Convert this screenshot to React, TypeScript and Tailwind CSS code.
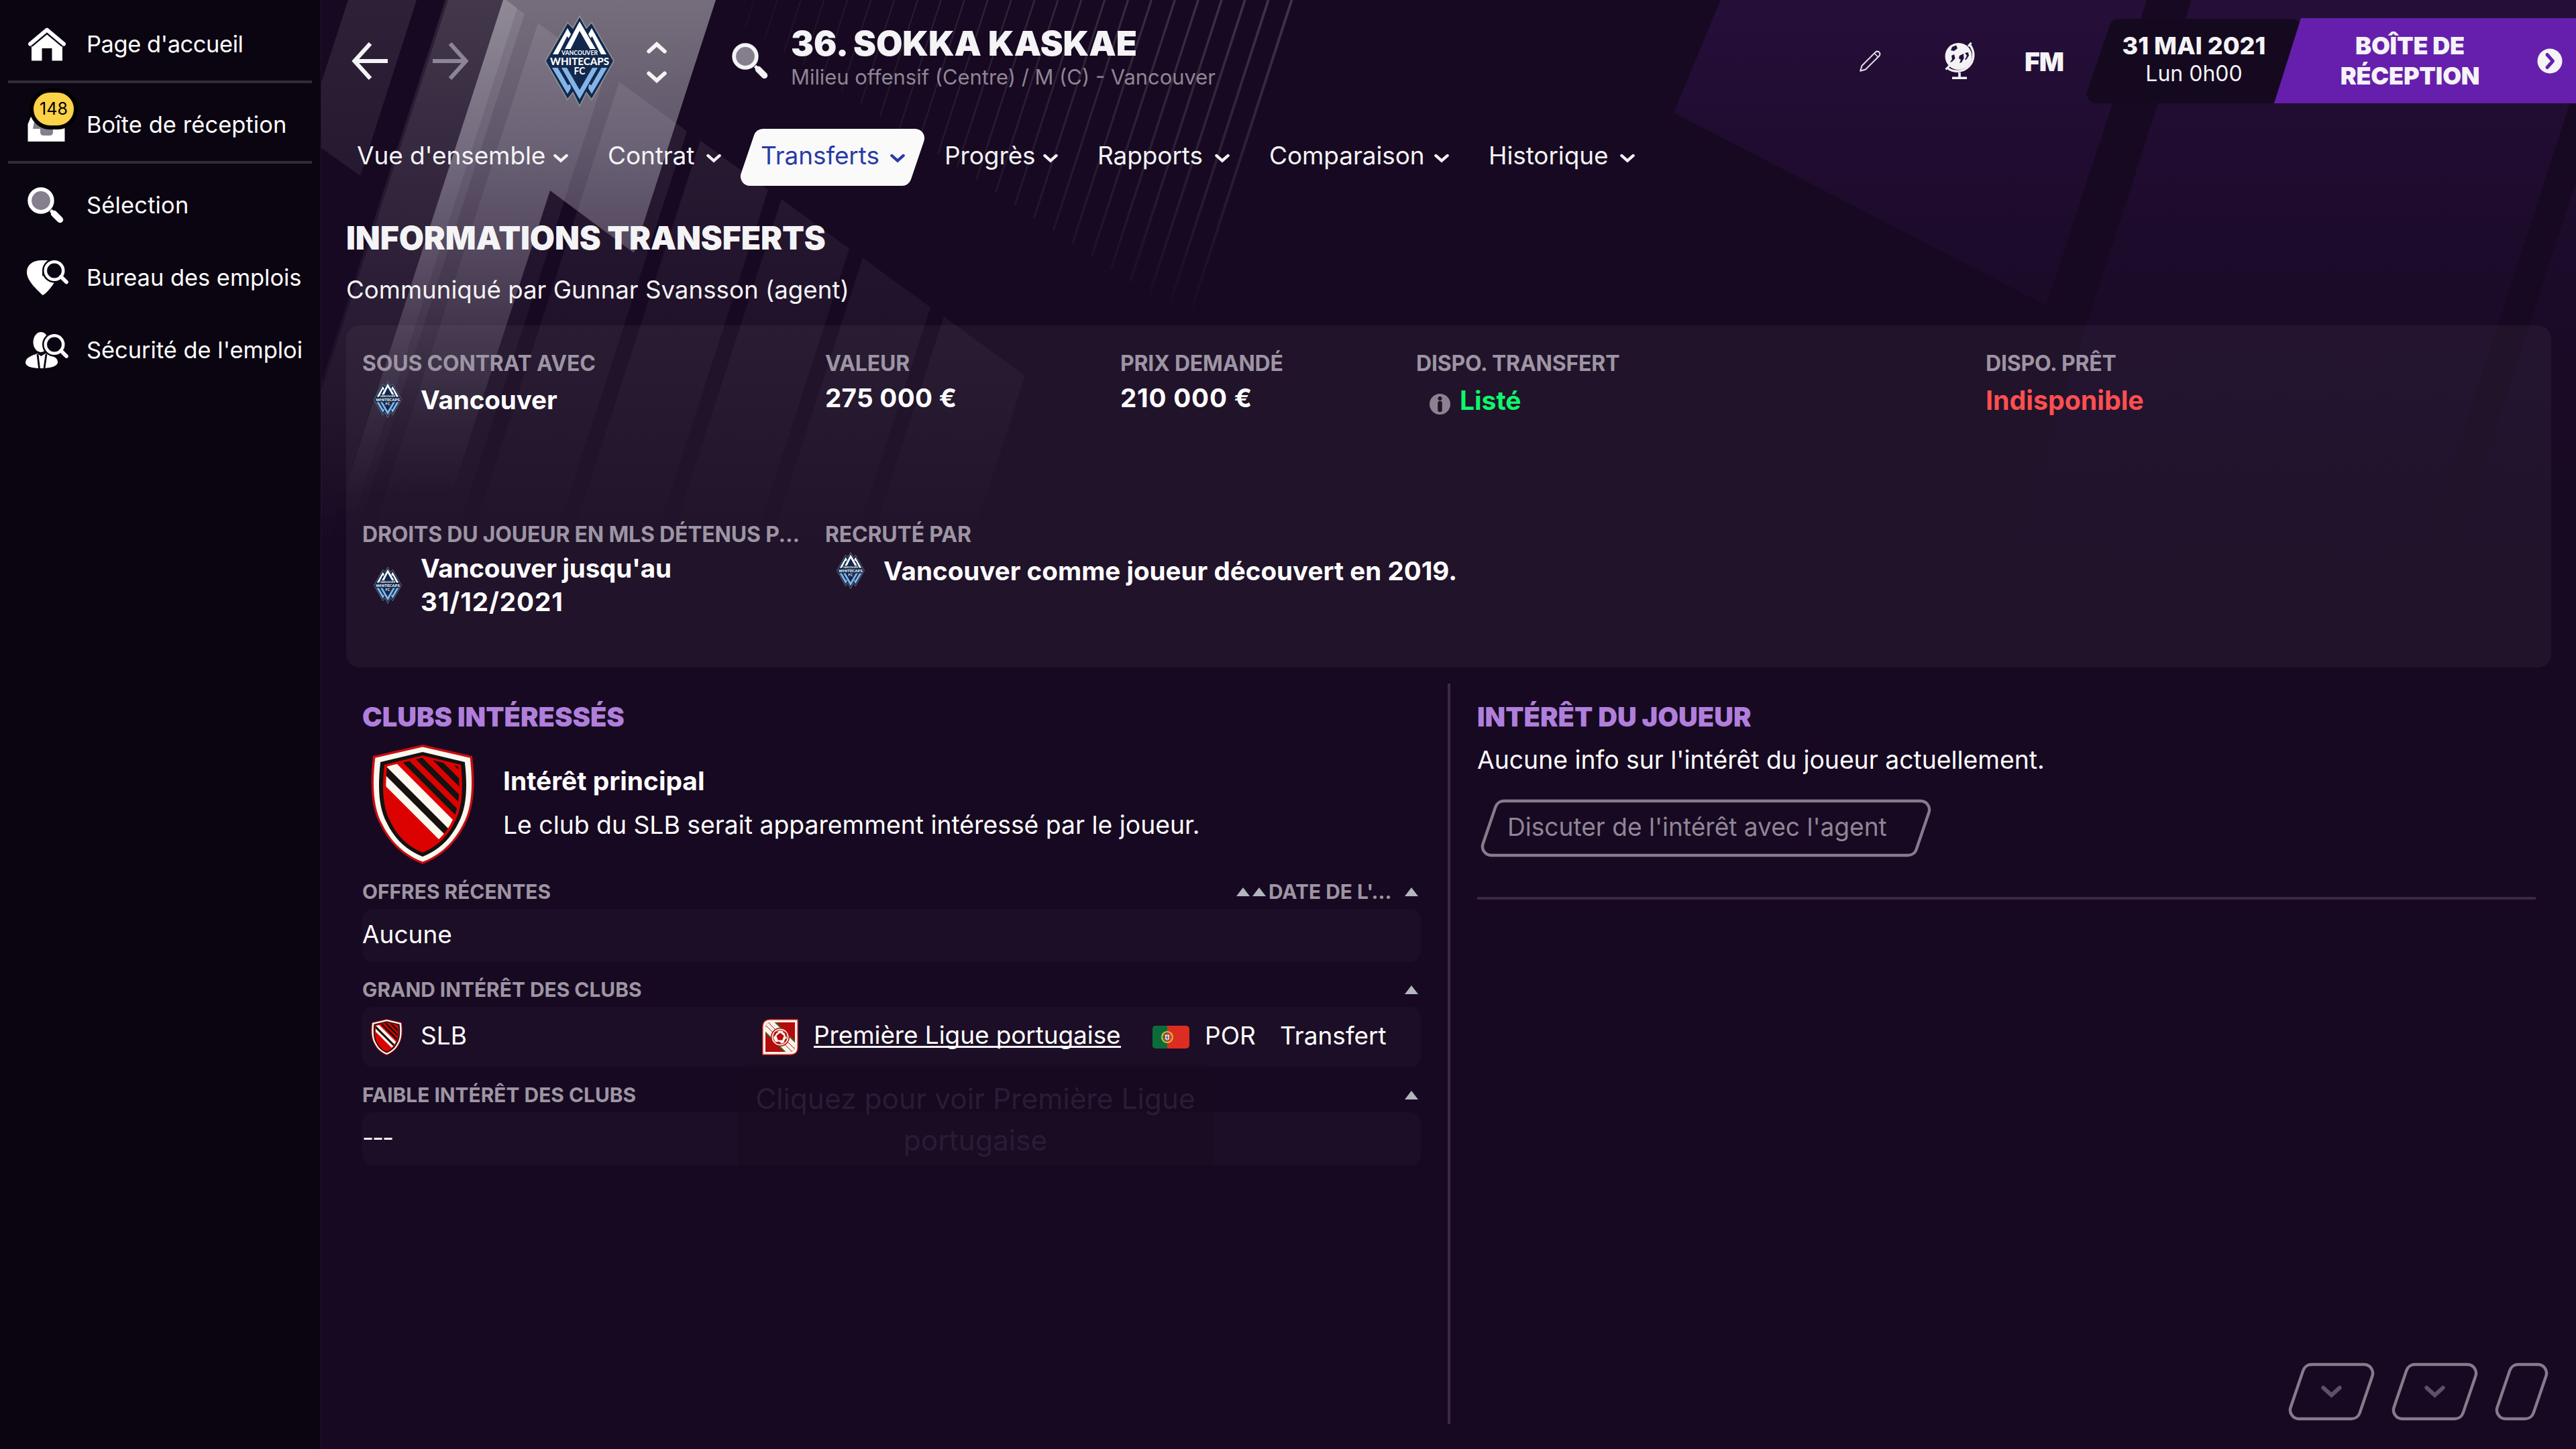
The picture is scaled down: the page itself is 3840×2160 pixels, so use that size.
import React from "react";

/* ---------- background artwork ---------- */

const STRIPS = [-2, -1, 0, 1, 2, 3, 4];
const RAYS = Array.from({ length: 24 }, (_, i) => i);

function Backdrop() {
  return (
    <svg className="absolute inset-0 h-full w-full" viewBox="0 0 3840 2160" aria-hidden="true">
      <defs>
        <linearGradient id="beam" gradientUnits="userSpaceOnUse" x1="0" y1="0" x2="0" y2="740">
          <stop offset="0" stopColor="#fff" stopOpacity="0.41" />
          <stop offset="0.3" stopColor="#f4f2ff" stopOpacity="0.33" />
          <stop offset="0.62" stopColor="#f4ecff" stopOpacity="0.18" />
          <stop offset="0.85" stopColor="#f4ecff" stopOpacity="0.05" />
          <stop offset="1" stopColor="#fff" stopOpacity="0" />
        </linearGradient>
        <linearGradient id="dim" gradientUnits="userSpaceOnUse" x1="0" y1="0" x2="0" y2="820">
          <stop offset="0" stopColor="#fff" stopOpacity="0.1" />
          <stop offset="0.5" stopColor="#e8e4ff" stopOpacity="0.05" />
          <stop offset="1" stopColor="#fff" stopOpacity="0" />
        </linearGradient>
        <linearGradient id="glow" gradientUnits="userSpaceOnUse" x1="0" y1="0" x2="0" y2="860">
          <stop offset="0" stopColor="#8230d0" stopOpacity="0.14" />
          <stop offset="0.5" stopColor="#6a24b8" stopOpacity="0.05" />
          <stop offset="1" stopColor="#6a24b8" stopOpacity="0" />
        </linearGradient>
        <linearGradient id="ray" gradientUnits="userSpaceOnUse" x1="0" y1="0" x2="0" y2="490">
          <stop offset="0" stopColor="#fff" stopOpacity="0.18" />
          <stop offset="1" stopColor="#fff" stopOpacity="0" />
        </linearGradient>
      </defs>
      <polygon points="519,0 621,0 537,262 478,220 478,126" fill="url(#dim)" />
      <polygon points="668,0 750,0 478,840 396,840" fill="url(#dim)" />
      {STRIPS.map((k) => {
        const x = 923 + 121 * k;
        const y = 122 + 87.5 * k;
        const w = k === 4 ? 121 : 101;
        const drop = w * 0.73;
        return (
          <polygon
            key={k}
            points={`${x},${y} ${x + w},${y + drop} ${x + w - (840 - y - drop) * 0.324},840 ${x - (840 - y) * 0.324},840`}
            fill="url(#dim)"
          />
        );
      })}
      <polygon points="750,0 1067,0 945,377 820,284 672,740 511,740" fill="url(#beam)" />
      <polygon points="750,0 756,0 771,12 531,760 505,760" fill="url(#dim)" />
      {RAYS.map((i) => {
        const len = 40 + i * 19;
        const x = 1124 + i * 34.85;
        return (
          <line
            key={i}
            x1={x}
            y1={0}
            x2={x - len * 0.324}
            y2={len}
            stroke="url(#ray)"
            strokeWidth={1 + i * 0.13}
            opacity={0.3 + i * 0.03}
          />
        );
      })}
      <polygon points="2565,0 3200,0 3050,455 2495,168" fill="url(#glow)" />
      <polygon points="3267,0 3840,0 3840,125 3592,890 2979,890" fill="url(#glow)" />
      <polygon points="3840,270 3840,890 3640,890" fill="url(#glow)" />
    </svg>
  );
}

/* ---------- shapes and icons ---------- */

function slantPath(w: number, h: number, inset: number) {
  const r = 14 - inset / 2;
  const shift = (h - inset * 2) * 0.34;
  const a = r * 1.4;
  const b = r * 0.72;
  const l = inset - r * 0.4;
  const rt = w - inset + r * 0.4;
  const t = inset;
  const bt = h - inset;
  const ux = 0.322;
  const uy = 0.947;
  return [
    `M${l + shift + b} ${t}`,
    `L${rt - a} ${t}`,
    `A${r} ${r} 0 0 1 ${rt - a * ux} ${t + a * uy}`,
    `L${rt - shift + b * ux} ${bt - b * uy}`,
    `A${r} ${r} 0 0 1 ${rt - shift - b} ${bt}`,
    `L${l + a} ${bt}`,
    `A${r} ${r} 0 0 1 ${l + a * ux} ${bt - a * uy}`,
    `L${l + shift - b * ux} ${t + b * uy}`,
    `A${r} ${r} 0 0 1 ${l + shift + b} ${t}Z`,
  ].join(" ");
}

function Slant({ w, h, fill = "none", stroke }: { w: number; h: number; fill?: string; stroke?: string }) {
  return (
    <svg className="absolute inset-0 h-full w-full overflow-visible" viewBox={`0 0 ${w} ${h}`} preserveAspectRatio="none">
      <path d={slantPath(w, h, stroke ? 2 : 0)} fill={fill} stroke={stroke} strokeWidth={stroke ? 4.4 : 0} />
    </svg>
  );
}

function Chevron({ className, up = false }: { className: string; up?: boolean }) {
  return (
    <svg className={className} viewBox="0 0 30 18" fill="none" stroke="currentColor" strokeWidth="5.8" strokeLinecap="round" strokeLinejoin="miter">
      <path d={up ? "M3.2 14.6 15 4 26.8 14.6" : "M3.2 3.4 15 14 26.8 3.4"} />
    </svg>
  );
}

function Magnifier({ className }: { className: string }) {
  return (
    <svg className={className} viewBox="0 0 54 54">
      <circle cx="20" cy="20" r="16.8" fill="#857e8c" stroke="currentColor" strokeWidth="5.8" />
      <path d="M34.5 34.5 39 39" stroke="currentColor" strokeWidth="5" />
      <path d="M39.5 39.5 48.5 48.5" stroke="currentColor" strokeWidth="9.5" strokeLinecap="round" />
    </svg>
  );
}

function HomeIcon() {
  return (
    <svg className="ml-[3px] h-[50px] w-[56px]" viewBox="0 0 56 50" fill="#fff">
      <path d="M3 24.5 28 3.5 53 24.5" fill="none" stroke="#fff" strokeWidth="6" strokeLinecap="round" strokeLinejoin="round" />
      <path d="M5 27.5 28 9 51 27.5V49.5H35.5V31H20.5V49.5H5Z" />
      <path d="M5.5 28 28 9.4 50.5 28" fill="none" stroke="#0b0411" strokeWidth="1.8" />
    </svg>
  );
}

function InboxIcon() {
  return (
    <svg className="ml-[2px] h-[50px] w-[56px]" viewBox="0 0 56 50">
      <path d="M8 6H48L55.5 24V50H.5V24Z" fill="#fff" />
      <path d="M12 10H44L48 30H38V36Q38 41 33 41H24Q19 41 19 36V31H8Z" fill="#857e8c" />
    </svg>
  );
}

function JobCentreIcon() {
  return (
    <svg className="h-[54px] w-[64px]" viewBox="0 0 64 54">
      <path d="M24 1C9 1 1 8 1 19C1 33 20 48 24.5 53C27 53 38 42 43 32L24 24Z" fill="#fff" />
      <path d="M22 1H32L42 32 26 26Z" fill="#fff" />
      <circle cx="42" cy="16.5" r="18" fill="#0b0411" />
      <circle cx="42" cy="16.5" r="13.2" fill="none" stroke="#fff" strokeWidth="4.6" />
      <path d="M52 25.5 60 33.5" stroke="#fff" strokeWidth="5.6" strokeLinecap="round" />
    </svg>
  );
}

function JobSecurityIcon() {
  return (
    <svg className="-ml-[2px] h-[54px] w-[66px]" viewBox="0 0 66 54">
      <ellipse cx="24" cy="15" rx="11.5" ry="15" fill="#fff" />
      <path d="M1 46C1 38 10 35 19 32L24 36 31 32C42 36 50 38 49 46C47 52 36 54 24 54S2 52 1 46Z" fill="#fff" />
      <path d="M19 33 21.5 54M32 33 29 54" stroke="#0b0411" strokeWidth="2.8" />
      <circle cx="44" cy="18.5" r="18" fill="#0b0411" />
      <circle cx="44" cy="18.5" r="13.2" fill="none" stroke="#fff" strokeWidth="4.6" />
      <path d="M54 28 62 36" stroke="#fff" strokeWidth="5.6" strokeLinecap="round" />
    </svg>
  );
}

function Arrow({ className, back = false }: { className: string; back?: boolean }) {
  return (
    <svg className={className} viewBox="0 0 54 56" fill="none" stroke="currentColor" strokeWidth="6.2">
      <path d={back ? "M54 28H5M28 2 4.5 28 28 54" : "M0 28H49M26 2 49.5 28 26 54"} />
    </svg>
  );
}

function WhitecapsCrest({ className }: { className: string }) {
  return (
    <svg className={className} viewBox="0 0 104 136" fontFamily="Lato, sans-serif" fontWeight="700" fill="#fff">
      <path
        d="M52 1 62 19 70 10.5 103 68 70 125.5 62 115 52 135 42 115 34 125.5 1 68 34 10.5 42 19Z"
        fill="#12294d"
        stroke="#8e9196"
        strokeWidth="1.6"
      />
      <path d="M30 50 52 9 76 50H67.5L52 23 38.5 50Z" />
      <path d="M12 58 34 19 39 28 35.5 34 33.5 31 20 58Z" />
      <path d="M92 58 70 19 65 28 68.5 34 70.5 31 84 58Z" />
      <path d="M25 78H33L52 111 71 78H79L52 125Z" fill="#84b4e8" />
      <path d="M11 78H19.5L34.5 104 38 102.5 39 108.5 34 117Z" fill="#84b4e8" />
      <path d="M93 78H84.5L69.5 104 66 102.5 65 108.5 70 117Z" fill="#84b4e8" />
      <text x="52" y="58.5" fontSize="9.4" textAnchor="middle" textLength="54" lengthAdjust="spacingAndGlyphs">VANCOUVER</text>
      <text x="52" y="73.5" fontSize="15" textAnchor="middle" textLength="88" lengthAdjust="spacingAndGlyphs" fontWeight="900">WHITECAPS</text>
      <text x="52" y="88" fontSize="14.5" textAnchor="middle" textLength="17" lengthAdjust="spacingAndGlyphs">FC</text>
    </svg>
  );
}

const SHIELD = "M77 0 151 17C156 60 154 95 140 120C125 150 103 168 77 178C51 168 29 150 14 120C0 95 -2 60 3 17Z";
const BANDS: [number, number, string][] = [
  [0, 20, "#fbf8f0"],
  [17, 14, "#141210"],
  [32, 16, "#fbf8f0"],
  [-27, 12, "#141210"],
  [-51, 12, "#141210"],
  [-75, 12, "#141210"],
  [-98, 10, "#141210"],
];

function ClubShield({ className, id }: { className: string; id: string }) {
  return (
    <svg className={className} viewBox="0 0 154 178">
      <clipPath id={id}>
        <path d={SHIELD} transform="translate(77 88) scale(.715 .77) translate(-77 -89)" />
      </clipPath>
      <path d={SHIELD} fill="#c80d12" />
      <path d={SHIELD} fill="#fbf8f0" transform="translate(77 89) scale(.955 .962) translate(-77 -89)" />
      <path d={SHIELD} fill="#141210" transform="translate(77 89) scale(.85 .876) translate(-77 -89)" />
      <path d={SHIELD} fill="#dd0202" transform="translate(77 88.5) scale(.77 .812) translate(-77 -89)" />
      <g clipPath={`url(#${id})`}>
        {BANDS.map(([c, span, color]) => (
          <line key={c} x1={-20} y1={-20 + c} x2={200} y2={200 + c} stroke={color} strokeWidth={span / 1.414} />
        ))}
      </g>
    </svg>
  );
}

function LeagueBadge() {
  return (
    <svg className="h-[54px] w-[54px]" viewBox="0 0 54 54">
      <clipPath id="league-inner">
        <path d="M14 5H49V40Q49 49 40 49H5V14Q5 5 14 5Z" />
      </clipPath>
      <path d="M12 0H54V42Q54 54 42 54H0V12Q0 0 12 0Z" fill="#c2161b" />
      <path d="M12 1.5H52.5V42Q52.5 52.5 42 52.5H1.5V12Q1.5 1.5 12 1.5Z" fill="#fbf3ea" />
      <path d="M14 5H49V40Q49 49 40 49H5V14Q5 5 14 5Z" fill="#b30a0c" />
      <g clipPath="url(#league-inner)">
        <path d="M-2 -2 56 56" stroke="#2f6b2c" strokeWidth="23" />
        <path d="M-2 -2 56 56" stroke="#fbf3ea" strokeWidth="19" />
        <path d="M4 0 56 52M0 4 52 56" stroke="#b30a0c" strokeWidth="1" />
      </g>
      <circle cx="27" cy="27" r="14" fill="#b30a0c" />
      <circle cx="27" cy="27" r="12.5" fill="#fbf3ea" />
      <circle cx="27" cy="27" r="10.8" fill="#b5332a" />
      <circle cx="27" cy="27" r="9.8" fill="#fbf3ea" />
      <path d="m27 21 5 4-2 6h-6l-2-6Z M18 26l3-5 3-2-5 1Z M36 27l-2-6-3-2 5 2Z M21 35l4-1 3 2-3 1Z M33 34l2-4 1-1-1 4Z" fill="#b30a0c" stroke="#b30a0c" />
    </svg>
  );
}

function PortugalFlag() {
  return (
    <svg className="h-[34px] w-[55px]" viewBox="0 0 55 34">
      <clipPath id="flag-round">
        <rect width="55" height="34" rx="5" />
      </clipPath>
      <g clipPath="url(#flag-round)">
        <rect width="55" height="34" fill="#dd2c22" />
        <rect width="22" height="34" fill="#0b6b3b" />
        <circle cx="22" cy="17" r="8" fill="none" stroke="#c9c23c" strokeWidth="2.2" />
        <ellipse cx="22" cy="17" rx="8" ry="3.5" fill="none" stroke="#c9a53c" strokeWidth="1" />
        <path d="M17.5 12H26.5V18Q26.5 23 22 23T17.5 18Z" fill="#d8382c" />
        <path d="M19 13.5H25V18Q25 21.5 22 21.5T19 18Z" fill="#dfe6ee" />
        <path d="M22 14.5V20.5M20 17.5H24" stroke="#3f74b5" strokeWidth="1.4" />
      </g>
    </svg>
  );
}

function PencilIcon() {
  return (
    <svg className="h-[32px] w-[32px]" viewBox="0 0 32 32" fill="none" stroke="#e6e1e9" strokeWidth="2" strokeLinejoin="round">
      <path d="M1.2 30.8 3.5 23 23.8 2.6Q26.5 .6 29.2 2.8Q31.6 5.5 29.4 8.2L9 28.5Z" />
      <path d="M22 4.4 27.6 10" strokeWidth="1.5" />
    </svg>
  );
}

function GlobeIcon() {
  return (
    <svg className="h-[55px] w-[48px]" viewBox="0 0 48 55">
      <circle cx="20.5" cy="21" r="20" fill="#f3f2f4" />
      <path d="M37.5 4A24.2 24.2 0 0 1 3.5 38" fill="none" stroke="#f3f2f4" strokeWidth="3.4" />
      <path d="M35 6 39.5 .8M1.5 40.5 7 35" stroke="#f3f2f4" strokeWidth="3" />
      <path d="M22 45V53M11 53.2H33" stroke="#f3f2f4" strokeWidth="3.6" />
      <path d="M11 7 17 4.5 19 9 14 13 9 12ZM14 18 15.5 24 11 29 8 30 11 25 10 20ZM22 20 28 17 28.5 24 25 30 22 31 24 26 21 24ZM30 16 35 15 36 20 32 26 30 26 33 20Z" fill="#240d39" />
    </svg>
  );
}

function SortMark() {
  return <span className="h-0 w-0 border-x-[10.5px] border-b-[13px] border-x-transparent border-b-[#b3b6bf]" />;
}

/* ---------- side bar ---------- */

function Sidebar() {
  return (
    <aside className="relative flex w-[479px] shrink-0 flex-col border-r border-[#26182f] bg-[#0b0411] pt-3 text-[34.4px] text-white">
      <NavItem label="Page d'accueil" className="tracking-[-0.4px]"><HomeIcon /></NavItem>
      <div className="mr-[13px] ml-3 h-1 bg-[#312a37]" />
      <NavItem label="Boîte de réception" className="mt-2 tracking-[0.1px]">
        <InboxIcon />
        <span className="absolute top-0 left-[44px] flex h-[61px] w-[72px] items-center justify-center rounded-full border-[6px] border-black bg-[#fcd248] text-[25px] tracking-normal text-black">
          148
        </span>
      </NavItem>
      <div className="mr-[13px] ml-3 h-1 bg-[#312a37]" />
      <NavItem label="Sélection" className="mt-2 tracking-[0.2px]"><Magnifier className="ml-[2px] h-[54px] w-[54px]" /></NavItem>
      <NavItem label="Bureau des emplois"><JobCentreIcon /></NavItem>
      <NavItem label="Sécurité de l'emploi"><JobSecurityIcon /></NavItem>
    </aside>
  );
}

function NavItem({ label, className = "", children }: { label: string; className?: string; children: React.ReactNode }) {
  return (
    <a className={`relative flex h-[108px] items-center whitespace-nowrap ${className}`}>
      <span className="flex w-[129px] shrink-0 pl-[39px]">{children}</span>
      {label}
    </a>
  );
}

/* ---------- top bar ---------- */

function TopBar() {
  return (
    <header className="flex h-[181px] items-center pl-[8px] text-[#f4f3f5]">
      <Arrow back className="h-[56px] w-[54px]" />
      <Arrow className="ml-[67px] h-[56px] w-[54px] text-[#8d8495]" />
      <WhitecapsCrest className="ml-[113px] h-[136px] w-[104px]" />
      <div className="ml-[48px] flex flex-col gap-[26px] pt-[4px]">
        <Chevron up className="h-[18px] w-[30px]" />
        <Chevron className="h-[18px] w-[30px]" />
      </div>
      <Magnifier className="ml-[97px] h-[54px] w-[54px]" />
      <div className="ml-[34px] whitespace-nowrap">
        <h1 className="-mt-[3px] text-[51px] leading-[51px] font-black tracking-[-0.1px]">36. SOKKA KASKAE</h1>
        <p className="text-[30.9px] leading-[50px] text-[#8f8596]">Milieu offensif (Centre) / M (C) - Vancouver</p>
      </div>
      <div className="ml-auto flex items-center">
        <PencilIcon />
        <span className="ml-[95px]"><GlobeIcon /></span>
        <span className="ml-[71px] pt-[2px] text-[39px] leading-[40px] font-black tracking-[-1px]">FM</span>
        <div className="relative ml-[35px] -mr-[40px] flex h-[126px] w-[319px] flex-col items-center justify-center pb-[3px] whitespace-nowrap">
          <Slant w={319} h={126} fill="#150920" />
          <strong className="relative text-[36px] leading-[41px] font-extrabold">31 MAI 2021</strong>
          <span className="relative text-[32px] leading-[41px]">Lun 0h00</span>
        </div>
        <button className="relative flex h-[127px] w-[450px] items-center bg-[#661fac] text-[36px] leading-[45px] font-black tracking-[-0.2px] [clip-path:polygon(40px_0,100%_0,100%_100%,0_100%)]">
          <span className="w-[405px] text-center">BOÎTE DE<br />RÉCEPTION</span>
          <svg className="-ml-[13px] h-[38px] w-[38px]" viewBox="0 0 38 38">
            <circle cx="19" cy="19" r="18.5" fill="#f4f3f5" />
            <path d="m15 9.5 8.5 9.5-8.5 9.5" fill="none" stroke="#661fac" strokeWidth="5" strokeLinecap="round" strokeLinejoin="round" />
          </svg>
        </button>
      </div>
    </header>
  );
}

const TABS = [
  { label: "Vue d'ensemble", width: "w-[293px]" },
  { label: "Contrat", width: "w-[147px]" },
  { label: "Transferts", width: "w-[193px]", active: true },
  { label: "Progrès", width: "w-[147px]" },
  { label: "Rapports", width: "w-[175px]" },
  { label: "Comparaison", width: "w-[246px]" },
  { label: "Historique", width: "w-[196px]" },
];

function Tabs() {
  return (
    <nav className="mt-[11px] flex h-[85px] gap-[59px] pl-[16px] text-[37px] tracking-[-0.1px] whitespace-nowrap">
      {TABS.map((t) => (
        <a key={t.label} className={`relative flex items-center ${t.active ? "text-[#2a3ba6]" : "text-[#f4f3f5]"}`}>
          {t.active && (
            <span className="absolute inset-y-0 -right-[29px] -left-[30px]">
              <Slant w={274} h={85} fill="#fafafa" />
            </span>
          )}
          <span className={`relative mb-[6px] ${t.width}`}>{t.label}</span>
          <Chevron className="relative mt-[3px] h-[14px] w-[22px]" />
        </a>
      ))}
    </nav>
  );
}

/* ---------- transfer details ---------- */

function Field({ label, className = "", children }: { label: string; className?: string; children: React.ReactNode }) {
  return (
    <div className={className}>
      <h3 className="truncate text-[32px] leading-[40px] font-bold tracking-[-0.2px] text-[#9d95a3]">{label}</h3>
      <div className="mt-[5px] flex min-h-[56px] items-center text-[38.6px] leading-[50px] font-bold whitespace-nowrap text-white">
        {children}
      </div>
    </div>
  );
}

function SmallCrest() {
  return (
    <span className="w-[87px] shrink-0 pl-[17px]">
      <WhitecapsCrest className="h-[55px] w-[42px]" />
    </span>
  );
}

function TransferPanel() {
  return (
    <section className="mt-[28px] mr-[37px] grid h-[510px] grid-cols-[690px_440px_441px_849px_1fr] grid-rows-[255px_255px] rounded-[20px] bg-white/[0.042] pt-[37px] pl-[24px]">
      <Field label="SOUS CONTRAT AVEC"><SmallCrest /><span className="mt-[1px] tracking-[-0.1px]">Vancouver</span></Field>
      <Field label="VALEUR"><span className="mb-[4px] tracking-[0.3px]">275 000 €</span></Field>
      <Field label="PRIX DEMANDÉ"><span className="mb-[4px] tracking-[0.8px]">210 000 €</span></Field>
      <Field label="DISPO. TRANSFERT">
        <svg className="mt-[14px] mr-[14px] ml-[20px] h-[31px] w-[31px]" viewBox="0 0 31 31">
          <circle cx="15.5" cy="15.5" r="15.5" fill="#8a828f" />
          <circle cx="15.5" cy="7" r="3" fill="#20132a" />
          <path d="M15.5 14V24" stroke="#20132a" strokeWidth="6.5" strokeLinecap="round" />
        </svg>
        <span className="mt-[4px] text-[39px] text-[#0df76b]">Listé</span>
      </Field>
      <Field label="DISPO. PRÊT"><span className="mt-[4px] text-[39.3px] text-[#ff4f4f]">Indisponible</span></Field>
      <Field label="DROITS DU JOUEUR EN MLS DÉTENUS P..." className="w-[660px]">
        <SmallCrest />
        <span className="tracking-[-0.2px]">Vancouver jusqu'au<br /><span className="tracking-[0.9px]">31/12/2021</span></span>
      </Field>
      <Field label="RECRUTÉ PAR" className="col-span-3"><SmallCrest /><span className="mt-[1px]">Vancouver comme joueur découvert en 2019.</span></Field>
    </section>
  );
}

/* ---------- interested clubs ---------- */

function ListHeader({ label, children }: { label: string; children?: React.ReactNode }) {
  return (
    <div className="mt-[21px] flex h-10 items-center pr-[4px] text-[29.9px] leading-[40px] font-bold text-[#9d95a3]">
      {label}
      <span className="ml-auto flex items-center">
        {children}
        <SortMark />
      </span>
    </div>
  );
}

function InterestedClubs() {
  return (
    <section className="w-[1642px] shrink-0 pt-[25px] pr-[40px] pl-[24px] text-white">
      <h2 className="text-[39.8px] leading-[50px] font-black text-[#b07fdc]">CLUBS INTÉRESSÉS</h2>
      <div className="mt-[16px] flex h-[178px] items-center">
        <ClubShield id="shield-large" className="ml-[13px] h-[178px] w-[154px]" />
        <div className="mb-[4px] ml-[43px] text-[37.3px] leading-[66px] whitespace-nowrap">
          <h3 className="text-[38.9px] font-bold">Intérêt principal</h3>
          <p>Le club du SLB serait apparemment intéressé par le joueur.</p>
        </div>
      </div>

      <ListHeader label="OFFRES RÉCENTES">
        <span className="flex gap-[4px]"><SortMark /><SortMark /></span>
        <span className="mr-[15px] ml-[4px] w-[188px]">DATE DE L'...</span>
      </ListHeader>
      <div className="mt-[6px] flex h-[79px] items-center rounded-[16px] bg-white/[0.025] pb-[4px] text-[37px]">Aucune</div>

      <ListHeader label="GRAND INTÉRÊT DES CLUBS" />
      <div className="relative mt-[6px] grid h-[90px] grid-cols-[596px_582px_190px_1fr] items-center rounded-[16px] bg-white/[0.025] text-[37px] whitespace-nowrap">
        <span className="flex items-center">
          <ClubShield id="shield-small" className="mr-[27px] ml-[13px] h-[54px] w-[47px]" />
          <span className="pb-[5px]">SLB</span>
        </span>
        <span className="flex items-center">
          <LeagueBadge />
          <a className="mb-[5px] ml-[23px] border-b-[3px] border-white leading-[33px] tracking-[-0.1px]">Première Ligue portugaise</a>
        </span>
        <span className="flex items-center"><PortugalFlag /><span className="ml-[23px] pb-[5px]">POR</span></span>
        <span className="pb-[5px]">Transfert</span>
        <div className="absolute top-[85px] left-[560px] w-[708px] rounded-[16px] bg-[#170921]/40 pt-[21px] pb-[21px] text-center text-[42.5px] leading-[62px] text-[#2a1c36]">
          Cliquez pour voir Première Ligue<br />portugaise
        </div>
      </div>

      <ListHeader label="FAIBLE INTÉRÊT DES CLUBS" />
      <div className="mt-[6px] flex h-[79px] items-center rounded-[16px] bg-white/[0.025] pb-[4px] text-[37px] tracking-[-2px]">---</div>
    </section>
  );
}

/* ---------- player interest ---------- */

function PlayerInterest() {
  return (
    <section className="flex flex-1 flex-col pt-[25px] pr-[60px] pl-[40px]">
      <h2 className="text-[39.8px] leading-[50px] font-black text-[#b07fdc]">INTÉRÊT DU JOUEUR</h2>
      <p className="mt-[14px] text-[37.3px] leading-[50px] text-white">Aucune info sur l'intérêt du joueur actuellement.</p>
      <button className="relative mt-[34px] ml-[6px] h-[85px] w-[670px] pb-[4px] pl-[39px] text-left text-[37.1px] text-[#8f8596]">
        <Slant w={670} h={85} stroke="#857b8c" />
        <span className="relative">Discuter de l'intérêt avec l'agent</span>
      </button>
      <div className="mt-[60px] h-1 bg-[#3a2a45]" />
      <div className="mt-auto -mr-[18px] mb-[6px] flex justify-end gap-[27px] text-[#5e5068]">
        <button className="relative flex h-[85px] w-[127px] items-center justify-center">
          <Slant w={127} h={85} stroke="#857b8c" />
          <Chevron className="h-[19px] w-[31px]" />
        </button>
        <button className="relative flex h-[85px] w-[127px] items-center justify-center">
          <Slant w={127} h={85} stroke="#857b8c" />
          <Chevron className="h-[19px] w-[31px]" />
        </button>
        <button className="relative h-[85px] w-[78px]">
          <Slant w={78} h={85} stroke="#857b8c" />
        </button>
      </div>
    </section>
  );
}

export default function App() {
  return (
    <div className="relative flex h-[2160px] w-[3840px] overflow-hidden bg-[#170921] font-['Inter',sans-serif]">
      <Backdrop />
      <Sidebar />
      <main className="relative flex flex-1 flex-col pl-[37px]">
        <TopBar />
        <Tabs />
        <h2 className="mt-[51px] text-[48px] leading-[54px] font-black tracking-[-0.1px] text-[#f4f3f5]">INFORMATIONS TRANSFERTS</h2>
        <p className="mt-[25px] text-[36.7px] leading-[50px] text-[#f4f3f5]">Communiqué par Gunnar Svansson (agent)</p>
        <TransferPanel />
        <div className="mt-[24px] flex h-[1104px]">
          <InterestedClubs />
          <div className="w-1 bg-[#3a2a45]" />
          <PlayerInterest />
        </div>
      </main>
    </div>
  );
}
